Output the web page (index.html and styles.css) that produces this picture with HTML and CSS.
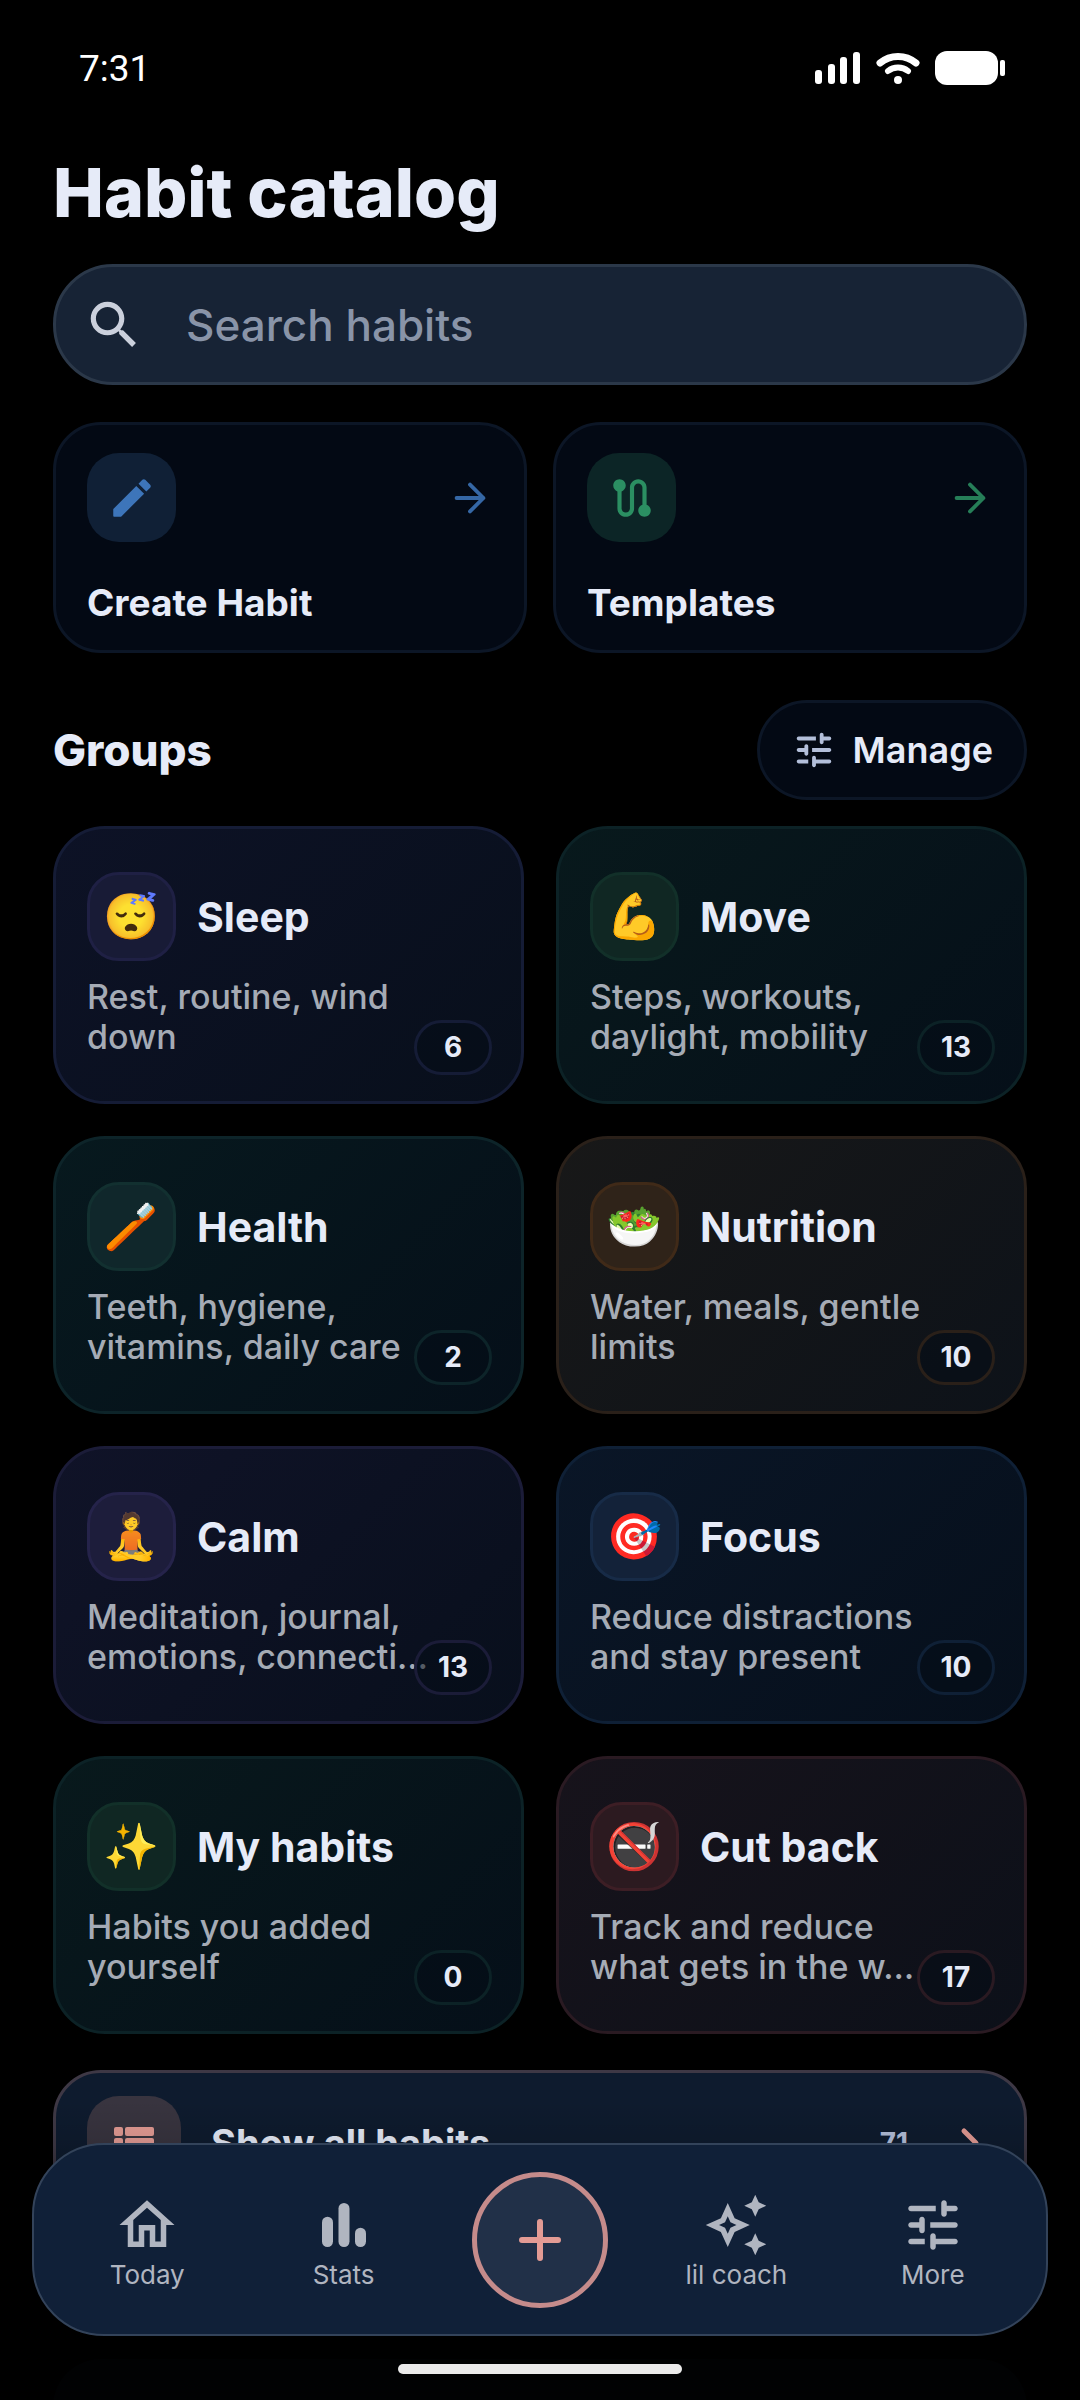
FILE: index.html
```
<!DOCTYPE html>
<html lang="en">
<head>
    <meta charset="UTF-8">
    <meta name="viewport" content="width=device-width, initial-scale=1.0">
    <title>Habit catalog</title>
    <link rel="stylesheet" href="styles.css">
</head>
<body>

<div class="app">
    <!-- Status Bar -->
    <div class="status-bar">
        <span class="time">7:31</span>
        <svg class="status-icons" viewBox="0 0 192 36" fill="#fff" aria-hidden="true">
            <rect x="1" y="20" width="7" height="14" rx="3"/>
            <rect x="14" y="14" width="7" height="20" rx="3"/>
            <rect x="26" y="7" width="7" height="27" rx="3"/>
            <rect x="39" y="2" width="7" height="32" rx="3"/>
            <path d="M66 13a28 28 0 0 1 36 0" fill="none" stroke="#fff" stroke-width="7" stroke-linecap="round"/>
            <path d="M74 21a16 16 0 0 1 20 0" fill="none" stroke="#fff" stroke-width="6" stroke-linecap="round"/>
            <circle cx="84" cy="30" r="4"/>
            <rect x="121" y="1" width="63" height="34" rx="12"/>
            <rect x="186" y="10" width="5" height="16" rx="2"/>
        </svg>
    </div>

    <main class="content">
        <h1>Habit catalog</h1>

        <!-- Search -->
        <label class="search">
            <svg class="icon" viewBox="0 0 24 24" aria-hidden="true"><path d="M15.5 14h-.79l-.28-.27C15.41 12.59 16 11.11 16 9.5 16 5.91 13.09 3 9.5 3S3 5.91 3 9.5 5.91 16 9.5 16c1.61 0 3.09-.59 4.23-1.57l.27.28v.79l5 4.99L20.49 19l-4.99-5zm-6 0C7.01 14 5 11.99 5 9.5S7.01 5 9.5 5 14 7.01 14 9.5 11.99 14 9.5 14z"/></svg>
            <input type="search" placeholder="Search habits" aria-label="Search habits">
        </label>

        <!-- Quick Actions -->
        <div class="actions">
            <button class="action action-blue">
                <span class="action-top">
                    <span class="tile"><svg class="icon" viewBox="0 0 24 24" aria-hidden="true"><path d="M3 17.46v3.04c0 .28.22.5.5.5h3.04c.13 0 .26-.05.35-.15L17.81 9.94l-3.75-3.75L3.15 17.1c-.1.1-.15.22-.15.36zM20.71 7.04c.39-.39.39-1.02 0-1.41l-2.34-2.34c-.39-.39-1.02-.39-1.41 0l-1.83 1.83 3.75 3.75 1.83-1.83z"/></svg></span>
                    <svg class="arrow" viewBox="0 0 24 24" aria-hidden="true"><path d="M5 12h14M12 5l7 7-7 7"/></svg>
                </span>
                <span class="action-title">Create Habit</span>
            </button>
            <button class="action action-green">
                <span class="action-top">
                    <span class="tile"><svg class="icon" viewBox="0 0 24 24" aria-hidden="true"><path d="M19 15.18V7c0-2.21-1.79-4-4-4s-4 1.79-4 4v10c0 1.1-.9 2-2 2s-2-.9-2-2V8.82C8.16 8.4 9 7.3 9 6c0-1.66-1.34-3-3-3S3 4.34 3 6c0 1.3.84 2.4 2 2.82V17c0 2.21 1.79 4 4 4s4-1.79 4-4V7c0-1.1.9-2 2-2s2 .9 2 2v8.18c-1.16.41-2 1.51-2 2.82 0 1.66 1.34 3 3 3s3-1.34 3-3c0-1.3-.84-2.4-2-2.82z"/></svg></span>
                    <svg class="arrow" viewBox="0 0 24 24" aria-hidden="true"><path d="M5 12h14M12 5l7 7-7 7"/></svg>
                </span>
                <span class="action-title">Templates</span>
            </button>
        </div>

        <!-- Groups -->
        <div class="groups-header">
            <h2>Groups</h2>
            <button class="manage">
                <svg class="icon" viewBox="0 0 24 24" aria-hidden="true"><path d="M3 18c0 .55.45 1 1 1h5v-2H4c-.55 0-1 .45-1 1zM3 6c0 .55.45 1 1 1h9V5H4c-.55 0-1 .45-1 1zm10 14v-1h7c.55 0 1-.45 1-1s-.45-1-1-1h-7v-1c0-.55-.45-1-1-1s-1 .45-1 1v4c0 .55.45 1 1 1s1-.45 1-1zM7 10v1H4c-.55 0-1 .45-1 1s.45 1 1 1h3v1c0 .55.45 1 1 1s1-.45 1-1v-4c0-.55-.45-1-1-1s-1 .45-1 1zm14 2c0-.55-.45-1-1-1h-9v2h9c.55 0 1-.45 1-1zm-5-3c.55 0 1-.45 1-1V7h3c.55 0 1-.45 1-1s-.45-1-1-1h-3V4c0-.55-.45-1-1-1s-1 .45-1 1v4c0 .55.45 1 1 1z"/></svg>
                Manage
            </button>
        </div>

        <div class="groups">
            <a href="#sleep" class="group group-sleep">
                <span class="group-top"><span class="tile emoji">😴</span><span class="group-title">Sleep</span></span>
                <span class="group-text">Rest, routine, wind down</span>
                <span class="badge">6</span>
            </a>
            <a href="#move" class="group group-green">
                <span class="group-top"><span class="tile emoji">💪</span><span class="group-title">Move</span></span>
                <span class="group-text">Steps, workouts, daylight, mobility</span>
                <span class="badge">13</span>
            </a>
            <a href="#health" class="group group-health">
                <span class="group-top"><span class="tile emoji">🪥</span><span class="group-title">Health</span></span>
                <span class="group-text">Teeth, hygiene, vitamins, daily care</span>
                <span class="badge">2</span>
            </a>
            <a href="#nutrition" class="group group-nutrition">
                <span class="group-top"><span class="tile emoji">🥗</span><span class="group-title">Nutrition</span></span>
                <span class="group-text">Water, meals, gentle limits</span>
                <span class="badge">10</span>
            </a>
            <a href="#calm" class="group group-calm">
                <span class="group-top"><span class="tile emoji">🧘</span><span class="group-title">Calm</span></span>
                <span class="group-text">Meditation, journal, emotions, connecti…</span>
                <span class="badge">13</span>
            </a>
            <a href="#focus" class="group group-focus">
                <span class="group-top"><span class="tile emoji">🎯</span><span class="group-title">Focus</span></span>
                <span class="group-text">Reduce distractions and stay present</span>
                <span class="badge">10</span>
            </a>
            <a href="#my-habits" class="group group-green">
                <span class="group-top"><span class="tile emoji">✨</span><span class="group-title">My habits</span></span>
                <span class="group-text">Habits you added yourself</span>
                <span class="badge">0</span>
            </a>
            <a href="#cut-back" class="group group-cut">
                <span class="group-top"><span class="tile emoji">🚭</span><span class="group-title">Cut back</span></span>
                <span class="group-text">Track and reduce what gets in the w…</span>
                <span class="badge">17</span>
            </a>
        </div>

        <!-- Show All -->
        <a href="#all" class="show-all">
            <span class="show-all-icon"><svg viewBox="0 0 40 32" aria-hidden="true"><rect width="9" height="9" rx="2"/><rect x="11" width="29" height="9" rx="2"/><rect y="11" width="9" height="9" rx="2"/><rect x="11" y="11" width="29" height="9" rx="2"/><rect y="22" width="9" height="9" rx="2"/><rect x="11" y="22" width="29" height="9" rx="2"/></svg></span>
            <span class="show-all-title">Show all habits</span>
            <span class="show-all-count">71</span>
            <svg class="chevron" viewBox="0 0 24 32" aria-hidden="true"><path d="M4 4l12 12L4 28"/></svg>
        </a>
        <div class="next-card"></div>
    </main>

    <div class="fade"></div>

    <!-- Bottom Navigation -->
    <nav class="nav">
        <a href="#today" class="nav-item">
            <svg class="icon" viewBox="0 0 24 24" aria-hidden="true"><path d="M12 5.69l5 4.5V18h-2v-6H9v6H7v-7.81l5-4.5M12 3L2 12h3v8h6v-6h2v6h6v-8h3L12 3z"/></svg>
            Today
        </a>
        <a href="#stats" class="nav-item">
            <svg class="icon" viewBox="0 0 24 24" aria-hidden="true"><rect x="4" y="9" width="4" height="11" rx="2"/><rect x="10" y="4" width="4" height="16" rx="2"/><rect x="16" y="13" width="4" height="7" rx="2"/></svg>
            Stats
        </a>
        <button class="add" aria-label="Add habit">
            <svg viewBox="0 0 42 42" aria-hidden="true"><path d="M21 3v36M3 21h36"/></svg>
        </button>
        <a href="#coach" class="nav-item">
            <svg class="icon" viewBox="0 0 24 24" aria-hidden="true"><path d="M19 9l1.25-2.75L23 5l-2.75-1.25L19 1l-1.25 2.75L15 5l2.75 1.25L19 9zm0 6l-1.25 2.75L15 19l2.75 1.25L19 23l1.25-2.75L23 19l-2.75-1.25L19 15zm-7.5-5.5L9 4 6.5 9.5 1 12l5.5 2.5L9 20l2.5-5.5L17 12l-5.5-2.5zm-1.51 3.49L9 15.17l-.99-2.18L5.83 12l2.18-.99L9 8.83l.99 2.18 2.18.99-2.18.99z"/></svg>
            lil coach
        </a>
        <a href="#more" class="nav-item">
            <svg class="icon" viewBox="0 0 24 24" aria-hidden="true"><path d="M3 18c0 .55.45 1 1 1h5v-2H4c-.55 0-1 .45-1 1zM3 6c0 .55.45 1 1 1h9V5H4c-.55 0-1 .45-1 1zm10 14v-1h7c.55 0 1-.45 1-1s-.45-1-1-1h-7v-1c0-.55-.45-1-1-1s-1 .45-1 1v4c0 .55.45 1 1 1s1-.45 1-1zM7 10v1H4c-.55 0-1 .45-1 1s.45 1 1 1h3v1c0 .55.45 1 1 1s1-.45 1-1v-4c0-.55-.45-1-1-1s-1 .45-1 1zm14 2c0-.55-.45-1-1-1h-9v2h9c.55 0 1-.45 1-1zm-5-3c.55 0 1-.45 1-1V7h3c.55 0 1-.45 1-1s-.45-1-1-1h-3V4c0-.55-.45-1-1-1s-1 .45-1 1v4c0 .55.45 1 1 1z"/></svg>
            More
        </a>
    </nav>
    <div class="home-indicator"></div>
</div>

</body>
</html>
```
FILE: styles.css
```
/* Global Reset */
*, *::before, *::after {
    margin: 0;
    padding: 0;
    box-sizing: border-box;
}

/* Root Variables */
:root {
    --text: #e6ebf8;
    --text-soft: #a5abb5;
    --panel: #030914;
    --panel-line: #0c1626;
    --pink: #e39b94;
}

body {
    font-family: Inter, sans-serif;
    background-color: #000;
    color: var(--text);
}

a {
    color: inherit;
    text-decoration: none;
}

button {
    font: inherit;
    color: inherit;
    text-align: left;
    cursor: pointer;
}

svg {
    display: block;
    flex: none;
}

.icon {
    fill: currentColor;
}

.app {
    position: relative;
    height: 100vh;
    overflow: hidden;
}

/* Status Bar */
.status-bar {
    display: flex;
    align-items: center;
    justify-content: space-between;
    height: 136px;
    padding: 0 74px 0 79px;
}

.time {
    font-family: Roboto, sans-serif;
    font-size: 37px;
    color: #fff;
}

.status-icons {
    width: 192px;
    height: 36px;
}

/* Content */
.content {
    padding: 16px 53px 0;
}

h1 {
    font-size: 68px;
    line-height: 80px;
    font-weight: 800;
    margin-bottom: 32px;
}

/* Search */
.search {
    display: flex;
    align-items: center;
    gap: 41px;
    height: 121px;
    padding: 0 27px;
    background-color: #172335;
    border: 3px solid #2b3849;
    border-radius: 60px;
    color: #cbd0dc;
    margin-bottom: 37px;
}

.search .icon {
    width: 62px;
    height: 62px;
}

.search input {
    flex: 1;
    min-width: 0;
    font: 500 44px Inter, sans-serif;
    color: var(--text);
    background: none;
    border: none;
    outline: none;
}

.search input::placeholder {
    color: #8994a8;
    opacity: 1;
}

/* Quick Actions */
.actions {
    display: grid;
    grid-template-columns: 1fr 1fr;
    gap: 26px;
    margin-bottom: 47px;
}

.action {
    display: flex;
    flex-direction: column;
    gap: 39px;
    padding: 28px 31px 25px;
    background-color: var(--panel);
    border: 3px solid var(--panel-line);
    border-radius: 48px;
}

.action-top {
    display: flex;
    align-items: center;
    justify-content: space-between;
    width: 100%;
}

.tile {
    display: flex;
    align-items: center;
    justify-content: center;
    flex: none;
    width: 89px;
    height: 89px;
    border-radius: 32px;
}

.tile .icon {
    width: 50px;
    height: 50px;
}

.arrow {
    width: 46px;
    height: 46px;
    fill: none;
    stroke: currentColor;
    stroke-width: 2;
    stroke-linecap: round;
    stroke-linejoin: round;
    opacity: 0.88;
}

.action-blue .action-top {
    color: #3d75ba;
}

.action-blue .tile {
    background-color: #102036;
}

.action-green .action-top {
    color: #2b8f62;
}

.action-green .tile {
    background-color: #0c2526;
}

.action-title {
    font-size: 37px;
    line-height: 44px;
    font-weight: 700;
}

/* Groups Header */
.groups-header {
    display: flex;
    align-items: center;
    justify-content: space-between;
    margin-bottom: 26px;
}

h2 {
    font-size: 44px;
    font-weight: 800;
}

.manage {
    display: flex;
    align-items: center;
    gap: 16px;
    height: 100px;
    padding: 0 31px;
    font-size: 36px;
    font-weight: 600;
    background-color: var(--panel);
    border: 3px solid var(--panel-line);
    border-radius: 50px;
}

.manage .icon {
    width: 46px;
    height: 46px;
    color: #b3bfda;
}

/* Group Cards */
.groups {
    display: grid;
    grid-template-columns: 1fr 1fr;
    gap: 32px;
    margin-bottom: 36px;
}

.group {
    position: relative;
    min-width: 0;
    padding: 43px 31px 44px;
    background-image: linear-gradient(135deg, var(--from), var(--to));
    border: 3px solid var(--line);
    border-radius: 52px;
    background-origin: border-box;
}

.group-top {
    display: flex;
    align-items: center;
    gap: 21px;
    margin-bottom: 16px;
}

.group .tile {
    background-color: var(--tile);
    border: 3px solid var(--tile-line);
}

.emoji {
    font-family: "Noto Color Emoji", sans-serif;
    font-size: 45px;
    line-height: 52px;
}

.group-title {
    font-size: 41px;
    line-height: 48px;
    font-weight: 700;
}

.group-text {
    display: block;
    max-width: 346px;
    font-size: 34px;
    line-height: 40px;
    font-weight: 500;
    color: var(--text-soft);
}

.badge {
    position: absolute;
    right: 29px;
    bottom: 26px;
    min-width: 78px;
    padding: 0 20px;
    font-size: 28px;
    line-height: 49px;
    font-weight: 700;
    text-align: center;
    background-color: rgba(3, 11, 22, 0.5);
    border: 3px solid var(--line);
    border-radius: 28px;
}

.group-sleep {
    --from: #0d1226;
    --to: #080f1b;
    --line: #151c36;
    --tile: #181b36;
    --tile-line: #1f2044;
}

.group-green {
    --from: #08191c;
    --to: #050f19;
    --line: #0c2226;
    --tile: #102723;
    --tile-line: #123029;
}

.group-health {
    --from: #07191e;
    --to: #050f19;
    --line: #0d2429;
    --tile: #10272b;
    --tile-line: #123030;
}

.group-nutrition {
    --from: #181818;
    --to: #0d1219;
    --line: #2a2019;
    --tile: #2f2319;
    --tile-line: #402a18;
}

.group-calm {
    --from: #101328;
    --to: #080f1c;
    --line: #1b1c38;
    --tile: #1d1d3b;
    --tile-line: #25234a;
}

.group-focus {
    --from: #0a1627;
    --to: #060f1b;
    --line: #0f2036;
    --tile: #132239;
    --tile-line: #172b47;
}

.group-cut {
    --from: #17131b;
    --to: #0c1019;
    --line: #2a1a22;
    --tile: #2c1a20;
    --tile-line: #3d1e25;
}

/* Show All */
.show-all {
    display: flex;
    align-items: center;
    padding: 23px 31px;
    background-color: #0e1b2e;
    border: 3px solid #3e3845;
    border-radius: 48px;
    margin-bottom: 143px;
}

.show-all-icon {
    display: flex;
    align-items: center;
    justify-content: center;
    width: 94px;
    height: 94px;
    margin-right: 30px;
    background-color: #38343f;
    border-radius: 32px;
}

.show-all-icon svg {
    width: 40px;
    height: 32px;
    fill: var(--pink);
}

.show-all-title {
    font-size: 38px;
    line-height: 48px;
    font-weight: 700;
}

.show-all-count {
    margin-left: auto;
    margin-right: 52px;
    font-size: 28px;
    font-weight: 700;
    color: #b3bfda;
}

.chevron {
    width: 24px;
    height: 32px;
    margin-right: 9px;
    fill: none;
    stroke: var(--pink);
    stroke-width: 5;
    stroke-linecap: round;
    stroke-linejoin: round;
}

.next-card {
    height: 200px;
    background-color: #0f1c30;
    border-radius: 48px;
}

.fade {
    position: absolute;
    left: 0;
    right: 0;
    bottom: 0;
    height: 300px;
    background-image: linear-gradient(transparent, rgba(0, 0, 0, 0.1) 15%, rgba(0, 0, 0, 0.5) 40%, rgba(0, 0, 0, 0.94) 80%);
}

/* Bottom Navigation */
.nav {
    position: absolute;
    left: 32px;
    right: 32px;
    bottom: 64px;
    display: grid;
    grid-template-columns: repeat(5, 1fr);
    align-items: center;
    height: 193px;
    padding: 0 15px;
    background-color: #102038;
    border: 2px solid #33435a;
    border-radius: 72px;
}

.nav-item {
    display: flex;
    flex-direction: column;
    align-items: center;
    padding-top: 4px;
    font-size: 26px;
    line-height: 34px;
    color: #b0b5c0;
}

.nav-item .icon {
    width: 66px;
    height: 66px;
}

.add {
    display: flex;
    align-items: center;
    justify-content: center;
    justify-self: center;
    width: 136px;
    height: 136px;
    background-color: #213048;
    border: 5px solid #c58b8b;
    border-radius: 50%;
}

.add svg {
    width: 42px;
    height: 42px;
    fill: none;
    stroke: var(--pink);
    stroke-width: 6;
    stroke-linecap: round;
}

.home-indicator {
    position: absolute;
    left: 50%;
    bottom: 26px;
    width: 284px;
    height: 10px;
    margin-left: -142px;
    background-color: #ebebeb;
    border-radius: 5px;
}
```
